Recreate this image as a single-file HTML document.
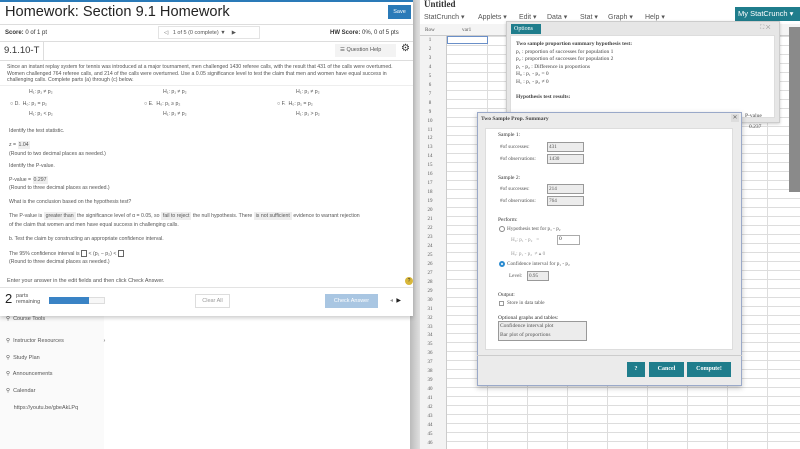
<!DOCTYPE html>
<html><head><meta charset="utf-8"><style>
*{margin:0;padding:0;box-sizing:border-box}
body{width:800px;height:449px;overflow:hidden;background:#e9e9e9;font-family:"Liberation Sans",sans-serif;position:relative;color:#333}
.a{position:absolute}
.t{font-size:5.2px;color:#555;white-space:nowrap}
.s{font-family:"Liberation Serif",serif}
.box{background:#ececec;border:1px solid #999}
.btn{background:#1f7d8c;color:#fff;font-family:"Liberation Serif",serif;font-size:6px;font-weight:bold;text-align:center;line-height:15px}
</style></head><body>
<!-- right statcrunch -->
<div class="a" style="left:416px;top:0;width:384px;height:449px;background:#fff"></div>
<div class="a s" style="left:424px;top:-1px;font-size:9px;font-weight:bold;color:#333">Untitled</div>
<div class="a" style="left:424px;top:13px;font-size:7px;color:#555;white-space:nowrap">StatCrunch ▾</div>
<div class="a" style="left:478px;top:13px;font-size:7px;color:#555;white-space:nowrap">Applets ▾</div>
<div class="a" style="left:519px;top:13px;font-size:7px;color:#555;white-space:nowrap">Edit ▾</div>
<div class="a" style="left:547px;top:13px;font-size:7px;color:#555;white-space:nowrap">Data ▾</div>
<div class="a" style="left:580px;top:13px;font-size:7px;color:#555;white-space:nowrap">Stat ▾</div>
<div class="a" style="left:608px;top:13px;font-size:7px;color:#555;white-space:nowrap">Graph ▾</div>
<div class="a" style="left:645px;top:13px;font-size:7px;color:#555;white-space:nowrap">Help ▾</div>
<div class="a" style="left:735px;top:7px;width:65px;height:14px;background:#1f7d8c;color:#fff;font-size:7.5px;line-height:14px;padding-left:3px">My StatCrunch ▾</div>
<div class="a" style="left:416px;top:24px;width:384px;height:425px;background:
repeating-linear-gradient(to bottom,transparent 0,transparent 8px,#ddd 8px,#ddd 9px) 0 4px/100% 100% no-repeat,
repeating-linear-gradient(to right,transparent 0,transparent 39px,#ddd 39px,#ddd 40px) 32px 0/100% 100% no-repeat;"></div>
<div class="a" style="left:416px;top:24px;width:31px;height:425px;background:#f3f3f3;border-right:1px solid #ccc"></div>
<div class="a" style="left:416px;top:24px;width:384px;height:12px;background:#f4f4f4;border-bottom:1px solid #ccc"></div>
<div class="a t s" style="left:425px;top:27px">Row</div>
<div class="a t s" style="left:462px;top:27px">var1</div>
<div class="a" style="left:447px;top:36px;width:41px;height:8px;border:1px solid #6a8fc8"></div>
<div class="a t s" style="left:420px;top:37px;line-height:8.96px;text-align:center;width:20px;white-space:normal;font-size:5px">1<br>2<br>3<br>4<br>5<br>6<br>7<br>8<br>9<br>10<br>11<br>12<br>13<br>14<br>15<br>16<br>17<br>18<br>19<br>20<br>21<br>22<br>23<br>24<br>25<br>26<br>27<br>28<br>29<br>30<br>31<br>32<br>33<br>34<br>35<br>36<br>37<br>38<br>39<br>40<br>41<br>42<br>43<br>44<br>45<br>46</div>
<div class="a" style="left:789px;top:27px;width:11px;height:165px;background:#8a8a8a"></div>
<div class="a" style="left:410px;top:0;width:10px;height:449px;background:linear-gradient(to right,#bbb,#e0e0e0)"></div>
<!-- options window -->
<div class="a" style="left:506px;top:21px;width:274px;height:102px;background:#e6e6e6;border:1px solid #ccc;box-shadow:0 1px 3px rgba(0,0,0,.2)"></div>
<div class="a s" style="left:511px;top:24px;width:30px;height:10px;background:#1f7d8c;color:#fff;font-size:6px;line-height:10px;padding-left:3px">Options</div>
<div class="a t" style="left:760px;top:25px;font-size:6px;color:#999">⛶ ✕</div>
<div class="a" style="left:510px;top:35px;width:265px;height:83px;background:#fff;border:1px solid #ddd"></div>
<div class="a s" style="left:516px;top:41px;font-size:5.5px;line-height:7.5px;color:#444;white-space:nowrap"><b>Two sample proportion summary hypothesis test:</b><br>p₁ : proportion of successes for population 1<br>p₂ : proportion of successes for population 2<br>p₁ - p₂ : Difference in proportions<br>H₀ : p₁ - p₂ = 0<br>H₁ : p₁ - p₂ ≠ 0<br><br><b>Hypothesis test results:</b></div>
<div class="a s" style="left:745px;top:113px;font-size:5.5px;color:#444">P-value</div>
<div class="a s" style="left:749px;top:124px;font-size:5.5px;color:#444">0.237</div>
<!-- dialog -->
<div class="a" style="left:477px;top:112px;width:265px;height:274px;background:#ebebeb;border:1px solid #9aa9c9;box-shadow:0 2px 5px rgba(0,0,0,.25)"></div>
<div class="a s" style="left:481px;top:116px;font-size:5.5px;font-weight:bold;color:#444">Two Sample Prop. Summary</div>
<div class="a" style="left:731px;top:114px;width:8px;height:8px;background:#ddd;font-size:6px;line-height:8px;text-align:center;color:#666">✕</div>
<div class="a" style="left:485px;top:128px;width:248px;height:222px;background:#fff;border:1px solid #ddd"></div>
<div class="a s" style="left:498px;top:132px;font-size:5.5px;color:#333;line-height:7px;white-space:nowrap">Sample 1:</div>
<div class="a s t" style="left:500px;top:144px">#of successes:</div>
<div class="a box s t" style="left:547px;top:142px;width:37px;height:10px;line-height:8px;padding-left:1px">431</div>
<div class="a s t" style="left:500px;top:156px">#of observations:</div>
<div class="a box s t" style="left:547px;top:154px;width:37px;height:10px;line-height:8px;padding-left:1px">1430</div>
<div class="a s" style="left:498px;top:175px;font-size:5.5px">Sample 2:</div>
<div class="a s t" style="left:500px;top:186px">#of successes:</div>
<div class="a box s t" style="left:547px;top:184px;width:37px;height:10px;line-height:8px;padding-left:1px">214</div>
<div class="a s t" style="left:500px;top:198px">#of observations:</div>
<div class="a box s t" style="left:547px;top:196px;width:37px;height:10px;line-height:8px;padding-left:1px">764</div>
<div class="a s" style="left:498px;top:217px;font-size:5.5px">Perform:</div>
<div class="a" style="left:499px;top:226px;width:6px;height:6px;border:1px solid #888;border-radius:50%"></div>
<div class="a s t" style="left:507px;top:226px">Hypothesis test for p₁ - p₂</div>
<div class="a s t" style="left:511px;top:237px;color:#999">H₀: p₁ - p₂ &nbsp;&nbsp;= </div>
<div class="a s" style="left:557px;top:235px;width:23px;height:10px;border:1px solid #aaa;background:#fff;font-size:5.5px;padding-left:1px">0</div>
<div class="a s t" style="left:511px;top:251px;color:#999">Hₐ: p₁ - p₂ &nbsp;≠ ▴ 0</div>
<div class="a" style="left:499px;top:261px;width:6px;height:6px;border:2px solid #2a8bd0;border-radius:50%"></div>
<div class="a s t" style="left:507px;top:261px">Confidence interval for p₁ - p₂</div>
<div class="a s t" style="left:509px;top:273px">Level:</div>
<div class="a box s t" style="left:527px;top:271px;width:22px;height:10px;line-height:8px;padding-left:1px">0.95</div>
<div class="a s" style="left:498px;top:292px;font-size:5.5px">Output:</div>
<div class="a" style="left:499px;top:301px;width:5px;height:5px;border:1px solid #999"></div>
<div class="a s t" style="left:507px;top:300px">Store in data table</div>
<div class="a s" style="left:498px;top:315px;font-size:5.5px">Optional graphs and tables:</div>
<div class="a box s" style="left:498px;top:321px;width:89px;height:20px;font-size:5.5px;line-height:9px;padding-left:1px;color:#555">Confidence interval plot<br>Bar plot of proportions</div>
<div class="a" style="left:477px;top:355px;width:265px;height:1px;background:#ccc"></div>
<div class="a btn" style="left:627px;top:362px;width:18px">?</div>
<div class="a btn" style="left:649px;top:362px;width:35px">Cancel</div>
<div class="a btn" style="left:687px;top:362px;width:44px">Compute!</div>
<!-- left nav behind -->
<div class="a" style="left:0;top:300px;width:104px;height:149px;background:#fafafa"></div>
<div class="a" style="left:104px;top:300px;width:306px;height:149px;background:#fff"></div>
<div class="a t" style="left:6px;top:316px;font-size:5.5px">⚲ &nbsp;Course Tools</div>
<div class="a t" style="left:6px;top:333px;line-height:16.7px;white-space:pre;font-size:5.5px">⚲  Instructor Resources                          ›
⚲  Study Plan
⚲  Announcements
⚲  Calendar
     https://youtu.be/gbeAkLPq</div>
<!-- left homework panel -->
<div class="a" style="left:0;top:0;width:413px;height:316px;background:#fff;box-shadow:0 2px 4px rgba(0,0,0,.2)"></div>
<div class="a" style="left:0;top:0;width:413px;height:2px;background:#2a7ab8"></div>
<div class="a" style="left:5px;top:4px;font-size:14.6px;color:#222">Homework: Section 9.1 Homework</div>
<div class="a" style="left:388px;top:5px;width:23px;height:14px;background:#2a7ab8;color:#fff;font-size:5.5px;line-height:14px;text-align:center">Save</div>
<div class="a" style="left:0;top:24px;width:413px;height:1px;background:#ddd"></div>
<div class="a t" style="left:5px;top:30px;font-size:6px;color:#333"><b>Score:</b> 0 of 1 pt</div>
<div class="a" style="left:158px;top:26px;width:102px;height:13px;border:1px solid #e3e3e3"></div>
<div class="a t" style="left:164px;top:30px;font-size:5.5px">◁ &nbsp;&nbsp;1 of 5 (0 complete) ▼ &nbsp;&nbsp;&nbsp;▶</div>
<div class="a t" style="left:330px;top:30px;font-size:6px;color:#333"><b>HW Score:</b> 0%, 0 of 5 pts</div>
<div class="a" style="left:0;top:41px;width:413px;height:1px;background:#ddd"></div>
<div class="a" style="left:4px;top:45px;font-size:9.5px;color:#333">9.1.10-T</div>
<div class="a" style="left:43px;top:42px;width:1px;height:18px;background:#ddd"></div>
<div class="a" style="left:335px;top:44px;width:61px;height:13px;background:#f3f3f3"></div>
<div class="a t" style="left:340px;top:47px;font-size:5.5px">☰ Question Help</div>
<div class="a" style="left:401px;top:43px;font-size:10px;color:#333">⚙</div>
<div class="a" style="left:0;top:60px;width:413px;height:1px;background:#ddd"></div>
<div class="a t" style="left:7px;top:64px;line-height:6.5px;white-space:normal;width:400px">Since an instant replay system for tennis was introduced at a major tournament, men challenged 1430 referee calls, with the result that 431 of the calls were overturned. Women challenged 764 referee calls, and 214 of the calls were overturned. Use a 0.05 significance level to test the claim that men and women have equal success in challenging calls. Complete parts (a) through (c) below.</div>
<div class="a" style="left:0;top:85px;width:413px;height:1px;background:#eee"></div>
<div class="a t" style="left:29px;top:89px">H₁: p₁ ≠ p₂</div>
<div class="a t" style="left:163px;top:89px">H₁: p₁ ≠ p₂</div>
<div class="a t" style="left:296px;top:89px">H₁: p₁ ≠ p₂</div>
<div class="a t" style="left:10px;top:101px">○ D. &nbsp;H₀: p₁ = p₂</div>
<div class="a t" style="left:144px;top:101px">○ E. &nbsp;H₀: p₁ ≥ p₂</div>
<div class="a t" style="left:277px;top:101px">○ F. &nbsp;H₀: p₁ = p₂</div>
<div class="a t" style="left:29px;top:111px">H₁: p₁ &lt; p₂</div>
<div class="a t" style="left:163px;top:111px">H₁: p₁ ≠ p₂</div>
<div class="a t" style="left:296px;top:111px">H₁: p₁ &gt; p₂</div>
<div class="a t" style="left:9px;top:128px">Identify the test statistic.</div>
<div class="a t" style="left:9px;top:142px">z = <span style="background:#eee;padding:1px">1.04</span></div>
<div class="a t" style="left:9px;top:151px">(Round to two decimal places as needed.)</div>
<div class="a t" style="left:9px;top:163px">Identify the P-value.</div>
<div class="a t" style="left:9px;top:177px">P-value = <span style="background:#eee;padding:1px">0.297</span></div>
<div class="a t" style="left:9px;top:185px">(Round to three decimal places as needed.)</div>
<div class="a t" style="left:9px;top:199px">What is the conclusion based on the hypothesis test?</div>
<div class="a t" style="left:9px;top:213px">The P-value is <span style="background:#eee;padding:1px 2px">greater than</span> the significance level of α = 0.05, so <span style="background:#eee;padding:1px 2px">fail to reject</span> the null hypothesis. There <span style="background:#eee;padding:1px 2px">is not sufficient</span> evidence to warrant rejection</div>
<div class="a t" style="left:9px;top:222px">of the claim that women and men have equal success in challenging calls.</div>
<div class="a t" style="left:9px;top:236px">b. Test the claim by constructing an appropriate confidence interval.</div>
<div class="a t" style="left:9px;top:250px">The 95% confidence interval is <span style="display:inline-block;width:6px;height:7px;border:1px solid #666;vertical-align:middle"></span> &lt; (p₁ − p₂) &lt; <span style="display:inline-block;width:6px;height:7px;border:1px solid #666;vertical-align:middle"></span></div>
<div class="a t" style="left:9px;top:259px">(Round to three decimal places as needed.)</div>
<div class="a t" style="left:7px;top:278px;font-size:5.5px">Enter your answer in the edit fields and then click Check Answer.</div>
<div class="a" style="left:405px;top:277px;width:8px;height:8px;border-radius:50%;background:#d8b73a;font-size:5px;text-align:center;line-height:8px">?</div>
<div class="a" style="left:0;top:287px;width:413px;height:1px;background:#e3e3e3"></div>
<div class="a" style="left:5px;top:291px;font-size:13px;color:#222">2</div>
<div class="a t" style="left:16px;top:293px;line-height:6px;font-size:5.5px">parts<br>remaining</div>
<div class="a" style="left:49px;top:297px;width:56px;height:7px;border:1px solid #ddd;background:#f7f7f7"></div>
<div class="a" style="left:49px;top:297px;width:40px;height:7px;background:#3a83c5"></div>
<div class="a" style="left:195px;top:294px;width:35px;height:14px;border:1px solid #ddd;font-size:5.5px;color:#999;text-align:center;line-height:13px">Clear All</div>
<div class="a" style="left:325px;top:294px;width:53px;height:14px;background:#a9c6e2;color:#fff;font-size:5.5px;text-align:center;line-height:14px">Check Answer</div>
<div class="a t" style="left:390px;top:297px;font-size:6px;color:#999">◂ &nbsp;<span style="color:#222">▶</span></div>
</body></html>
